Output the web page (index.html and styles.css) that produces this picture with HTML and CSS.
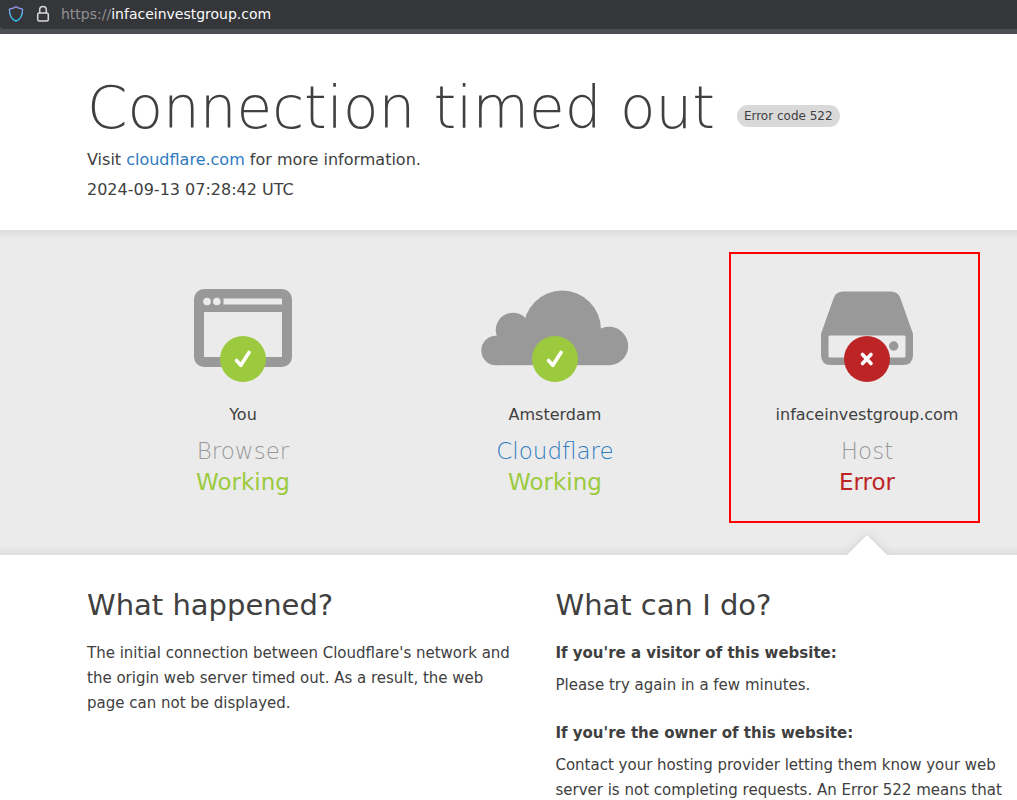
FILE: index.html
```
<!DOCTYPE html>
<html lang="en">
<head>
<meta charset="utf-8">
<meta name="viewport" content="width=device-width, initial-scale=1">
<title>infaceinvestgroup.com | 522: Connection timed out</title>
<link rel="stylesheet" href="styles.css">
</head>
<body>
<div class="toolbar">
  <div class="address">
    <svg class="shield" width="16" height="18" viewBox="0 0 16 18" fill="none" aria-hidden="true">
      <defs><linearGradient id="shield-line" x1="0" y1="1" x2="0" y2="0"><stop offset="0" stop-color="#26c6f5"/><stop offset="1" stop-color="#9a94ea"/></linearGradient></defs>
      <path d="M8 1.7 C6.2 3 4 3.6 2 3.9 C1.6 4 1.4 4.300 1.400 4.700 C1.400 9.500 2.800 13.900 8 16.200 C13.200 13.900 14.600 9.500 14.600 4.700 C14.600 4.300 14.400 4 14 3.900 C12 3.600 9.800 3 8 1.700 Z" stroke="url(#shield-line)" stroke-width="1.4" stroke-linejoin="round"/>
    </svg>
    <svg class="lock" width="14" height="18" viewBox="0 0 14 18" fill="none" stroke="#d9d9da" stroke-width="1.5" aria-hidden="true">
      <rect x="1.700" y="8" width="10.600" height="8" rx="1.500"/>
      <path d="M3.700 8V4.800a3.300 3.300 0 0 1 6.600 0V8"/>
    </svg>
    <span class="url"><span class="scheme">https://</span>infaceinvestgroup.com</span>
  </div>
</div>
<header class="intro">
  <div class="title-row">
    <h1 class="title">Connection timed out</h1>
    <span class="code">Error code 522</span>
  </div>
  <p class="lead">Visit <a class="link" href="https://www.cloudflare.com/">cloudflare.com</a> for more information.</p>
  <p class="lead">2024-09-13 07:28:42 UTC</p>
</header>
<section class="status">
  <div class="hop">
    <div class="figure">
      <svg width="98" height="78" viewBox="0 0 98 78" aria-hidden="true">
        <rect width="98" height="78" rx="10" fill="#999"/>
        <rect x="10" y="23" width="78" height="45" fill="#ebebeb"/>
        <circle cx="13" cy="12.500" r="3.800" fill="#ebebeb"/><circle cx="22.800" cy="12.500" r="3.800" fill="#ebebeb"/>
        <rect x="29.500" y="9.500" width="58.500" height="6" fill="#ebebeb"/>
      </svg>
      <svg class="badge" width="46" height="46" viewBox="0 0 46 46" aria-hidden="true"><circle cx="23" cy="23" r="23" fill="#9bca3e"/><path d="M16.500 24.500 L20.800 29.300 L29 16.500" fill="none" stroke="#fff" stroke-width="3.600" stroke-linecap="round" stroke-linejoin="round"/></svg>
    </div>
    <span class="place">You</span>
    <h3 class="role">Browser</h3>
    <span class="state ok">Working</span>
  </div>
  <div class="hop">
    <div class="figure">
      <svg width="148" height="78" viewBox="0 0 148 78" fill="#999" aria-hidden="true">
        <circle cx="15" cy="61.500" r="14.700"/>
        <circle cx="32" cy="41" r="17.300"/>
        <circle cx="81.200" cy="40.300" r="38.700"/>
        <circle cx="128" cy="57" r="19.200"/>
        <rect x="15" y="46.700" width="113" height="29.500"/>
      </svg>
      <svg class="badge" width="46" height="46" viewBox="0 0 46 46" aria-hidden="true"><circle cx="23" cy="23" r="23" fill="#9bca3e"/><path d="M16.500 24.500 L20.800 29.300 L29 16.500" fill="none" stroke="#fff" stroke-width="3.600" stroke-linecap="round" stroke-linejoin="round"/></svg>
    </div>
    <span class="place">Amsterdam</span>
    <h3 class="role"><a class="link" href="https://www.cloudflare.com/">Cloudflare</a></h3>
    <span class="state ok">Working</span>
  </div>
  <div class="hop host">
    <div class="figure">
      <svg width="92" height="78" viewBox="0 0 92 78" aria-hidden="true">
        <path fill="#999" d="M22 2.500 H70 Q77 2.500 79.300 9 L91 42 Q92 44 92 46 V66 Q92 76 82 76 H10 Q0 76 0 66 V46 Q0 44 1 42 L12.700 9 Q15 2.500 22 2.500 Z"/>
        <rect x="7.500" y="46.500" width="77" height="22" rx="1.500" fill="#ebebeb"/>
        <circle cx="72.700" cy="57" r="4.700" fill="#999"/>
      </svg>
      <svg class="badge" width="46" height="46" viewBox="0 0 46 46" aria-hidden="true"><circle cx="23" cy="23" r="23" fill="#bd2426"/><path d="M18.500 18.500 L27 27.500 M27 18.500 L18.500 27.500" fill="none" stroke="#fff" stroke-width="3.600" stroke-linecap="round"/></svg>
    </div>
    <span class="place">infaceinvestgroup.com</span>
    <h3 class="role">Host</h3>
    <span class="state bad">Error</span>
    <div class="highlight"></div>
    <svg class="pointer" width="60" height="28" viewBox="0 0 60 28" aria-hidden="true"><path class="pointer-shape" d="M10 28 L30 8 L50 28 Z" fill="#fff"/></svg>
  </div>
</section>
<main class="details">
  <section class="column">
    <h2 class="heading">What happened?</h2>
    <p class="text">The initial connection between Cloudflare's network and the origin web server timed out. As a result, the web page can not be displayed.</p>
  </section>
  <section class="column">
    <h2 class="heading">What can I do?</h2>
    <h3 class="subheading">If you're a visitor of this website:</h3>
    <p class="text">Please try again in a few minutes.</p>
    <h3 class="subheading">If you're the owner of this website:</h3>
    <p class="text">Contact your hosting provider letting them know your web server is not completing requests. An Error 522 means that</p>
  </section>
</main>
</body>
</html>
```
FILE: styles.css
```
* { box-sizing: border-box; }
body {
  margin: 0;
  overflow-x: hidden;
  background: #fff;
  color: #404040;
  font-family: "DejaVu Sans", sans-serif;
  font-size: 16px;
  line-height: 24px;
}
h1, h2, h3, p { margin: 0; font-weight: 400; }
.link { color: #2f7bbf; text-decoration: none; }

.toolbar { padding-bottom: 5px; background: #4e4f54; }
.address {
  display: flex;
  align-items: center;
  height: 29px;
  padding: 0 0 2px 8px;
  border-bottom-left-radius: 4px;
  background: #353639;
}
.lock { margin-left: 12px; }
.url { margin-left: 11px; font-size: 14px; color: #fbfbfe; }
.scheme { color: #919194; }

.intro { padding: 38px 0 25px 87px; }
.title-row { display: flex; align-items: flex-end; gap: 22px; }
.title { font-size: 58px; line-height: 73px; font-weight: 200; white-space: nowrap; }
.code {
  margin-bottom: 18px;
  padding: 0 7px;
  border-radius: 12px;
  background: #d9d9d9;
  font-size: 12px;
  line-height: 22px;
  white-space: nowrap;
}
.lead { line-height: 30px; }

.status {
  display: grid;
  grid-template-columns: repeat(3, 1fr);
  height: 325px;
  margin-right: -6px;
  padding: 59px 0 0 87px;
  background: linear-gradient(#dedede, #ebebeb 9px, #ebebeb 316px, #dedede);
}
.hop { position: relative; display: flex; flex-direction: column; align-items: center; }
.figure { position: relative; height: 78px; margin-bottom: 36px; }
.figure svg { display: block; }
.figure .badge { position: absolute; left: calc(50% - 23px); top: 47px; }
.role { margin-top: 8px; font-size: 23px; line-height: 32px; font-weight: 200; color: #999; }
.state { font-size: 23px; line-height: 30px; }
.ok { color: #9bca3e; }
.bad { color: #bd2426; }
.highlight { position: absolute; left: 18px; right: 43px; top: -37px; height: 271px; border: 2px solid #f00; }
.pointer { position: absolute; left: calc(50% - 30px); bottom: 0; }
.pointer-shape { filter: drop-shadow(0 0 4px #ccc); }

.details {
  display: grid;
  grid-template-columns: 22fr 23fr;
  column-gap: 27px;
  padding: 30px 0 0 87px;
  font-size: 15px;
}
.heading { margin-bottom: 16px; font-size: 29px; line-height: 40px; }
.subheading { font-size: 15px; line-height: 24px; font-weight: 700; margin-bottom: 8px; }
.text { padding-right: 8px; line-height: 25px; }
.text + .subheading { margin-top: 23px; }
```
